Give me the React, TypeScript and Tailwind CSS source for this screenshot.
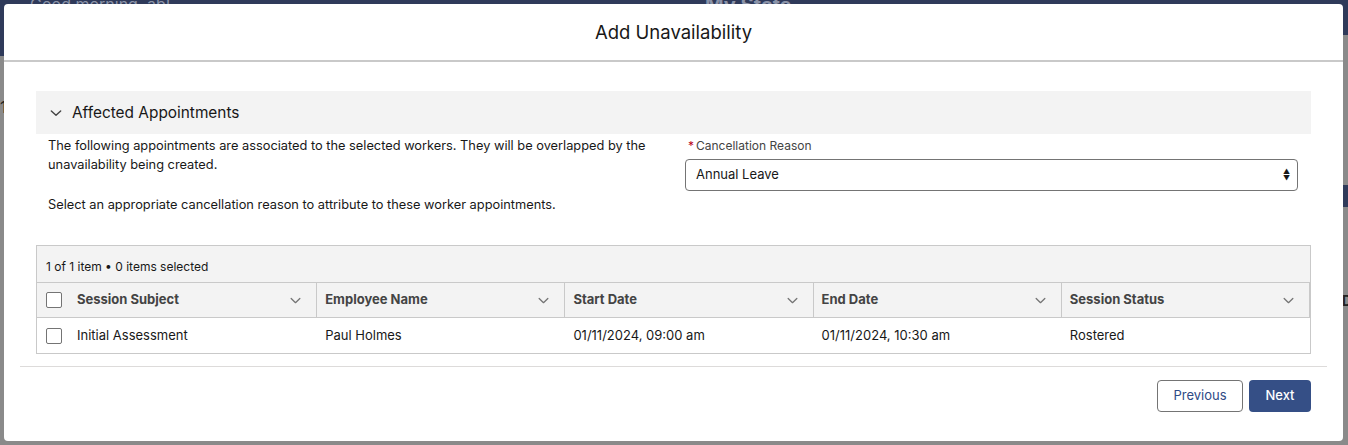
import React from "react";

const Chevron = ({ className = "" }: { className?: string }) => (
  <svg viewBox="0 0 12 12" className={className} fill="none" stroke="currentColor" strokeWidth="1.2">
    <path d="M2 4.2 L6 8 L10 4.2" strokeLinecap="round" strokeLinejoin="round" />
  </svg>
);

const Checkbox = () => (
  <div className="w-[16px] h-[16px] border border-[#747474] rounded-[2px] bg-white" />
);

const cols = ["Session Subject", "Employee Name", "Start Date", "End Date", "Session Status"];
const row = ["Initial Assessment", "Paul Holmes", "01/11/2024, 09:00 am", "01/11/2024, 10:30 am", "Rostered"];

export default function App() {
  return (
    <div
      className="relative w-[1348px] h-[445px] overflow-hidden bg-[#8a8a8a]"
      style={{ fontFamily: "Inter, 'Liberation Sans', sans-serif" }}
    >
      {/* background page */}
      <div className="absolute left-0 top-0 w-full h-[35px] bg-[#2f3a5a]" />
      <div className="absolute left-0 top-0 w-[20px] h-[56px] bg-[#2f3a5a]" />
      <div className="absolute left-[30px] top-[-8px] text-[16px] text-[#8b93a8]">Good morning, ab!</div>
      <div className="absolute left-[705px] top-[-10px] text-[20px] font-bold text-[#8b93a8]">My Stats</div>
      <div className="absolute right-0 top-[185px] w-[20px] h-[22px] bg-[#2f3a5a]" />
      <div className="absolute left-0 top-[95px] text-[16px] text-[#222]">1</div>
      <div className="absolute right-0 top-[290px] w-[6px] text-[14px] font-bold text-[#222]">D</div>

      {/* modal */}
      <div className="absolute left-[4px] top-[4px] w-[1339px] h-[437px] bg-white rounded-[4px] flex flex-col">
        <div className="h-[58px] flex items-center justify-center border-b-2 border-[#c9c9c9] text-[18.5px] text-[#181818] pt-[2px]">
          Add Unavailability
        </div>
        <div className="flex-1 px-[32px] pt-[29px]">
          <div className="h-[43px] bg-[#f3f3f3] flex items-center pl-[13px] gap-[9px] text-[15.4px] text-[#181818] pt-[1px]">
            <Chevron className="w-[14px] h-[14px] text-[#444]" />
            <span>Affected Appointments</span>
          </div>
          <div className="flex">
            <div className="w-[649px] pl-[12px] pt-[2px] text-[12.8px] leading-[19px] text-[#181818]">
              <p className="w-[610px]">
                The following appointments are associated to the selected workers. They will be overlapped by the
                unavailability being created.
              </p>
              <p className="mt-[21px]">Select an appropriate cancellation reason to attribute to these worker appointments.</p>
            </div>
            <div className="w-[613px] pt-[3px]">
              <div className="text-[12px] text-[#444] pl-[3px] leading-[18px]">
                <span className="text-[#ba0517] mr-[2px]">*</span>Cancellation Reason
              </div>
              <div className="mt-[4px] h-[32px] border border-[#747474] rounded-[4px] flex items-center justify-between pl-[10px] pr-[7px] text-[13px] text-[#181818]">
                <span>Annual Leave</span>
                <span className="flex flex-col text-[7px] leading-[7px] text-[#181818]">
                  <span>▲</span>
                  <span>▼</span>
                </span>
              </div>
            </div>
          </div>
          <div className="mt-[31px] border border-[#c9c9c9]">
            <div className="h-[37px] bg-[#f3f3f3] flex items-end pl-[9px] pb-[6px] text-[12px] text-[#181818] border-b border-[#c9c9c9]">
              1 of 1 item • 0 items selected
            </div>
            <div className="flex h-[35px] bg-[#f3f3f3] border-b border-[#c9c9c9] text-[13px] font-bold text-[#444]">
              <div className="w-[32px] flex items-center justify-center pl-[2px]">
                <Checkbox />
              </div>
              {cols.map((c) => (
                <div
                  key={c}
                  className="flex-1 flex items-center justify-between pl-[8px] pr-[14px] border-r border-[#c9c9c9]"
                >
                  <span>{c}</span>
                  <Chevron className="w-[13px] h-[13px] text-[#747474]" />
                </div>
              ))}
            </div>
            <div className="flex h-[35px] bg-white text-[13px] text-[#181818]">
              <div className="w-[32px] flex items-center justify-center pl-[2px]">
                <Checkbox />
              </div>
              {row.map((c) => (
                <div key={c} className="flex-1 flex items-center pl-[8px]">
                  {c}
                </div>
              ))}
            </div>
          </div>
        </div>
        <div className="mx-[16px] border-t border-[#dddbda]" />
        <div className="h-[74px] flex items-start justify-end gap-[6px] pr-[32px] pt-[13px]">
          <button className="h-[32px] w-[86px] border border-[#747474] rounded-[4px] bg-white text-[13px] text-[#2e4a85]">
            Previous
          </button>
          <button className="h-[32px] w-[62px] rounded-[4px] bg-[#354f86] text-[13px] font-medium text-white">
            Next
          </button>
        </div>
      </div>
    </div>
  );
}
